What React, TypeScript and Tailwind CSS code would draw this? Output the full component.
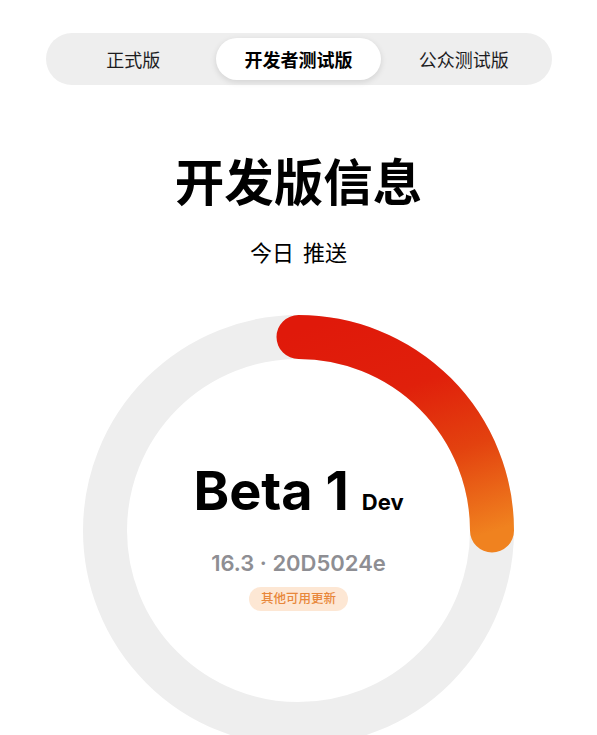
import { useState } from 'react';

const tabs = ['正式版', '开发者测试版', '公众测试版'];

const cjk = "font-['Noto_Sans_CJK_SC',sans-serif]";
const latin = "font-['Inter','Noto_Sans_CJK_SC',sans-serif]";

// progress ring: 431px box, stroke centred on r=193.5
function Ring() {
  const c = 215.5;
  const r = 193.5;
  return (
    <svg width="431" height="431" viewBox="0 0 431 431" className="block">
      <defs>
        <linearGradient id="arc" gradientUnits="userSpaceOnUse" x1="260" y1="0" x2="340" y2="240">
          <stop offset="0" stopColor="#e0190a" />
          <stop offset="0.35" stopColor="#e0200b" />
          <stop offset="0.65" stopColor="#e3420f" />
          <stop offset="1" stopColor="#f0821f" />
        </linearGradient>
      </defs>
      <circle cx={c} cy={c} r={r} fill="none" stroke="#eeeeee" strokeWidth="44" />
      <path
        d={`M ${c} ${c - r} A ${r} ${r} 0 0 1 ${c + r} ${c}`}
        fill="none"
        stroke="url(#arc)"
        strokeWidth="44"
        strokeLinecap="round"
      />
    </svg>
  );
}

export default function App() {
  const [active, setActive] = useState(1);

  return (
    <div className="h-screen overflow-hidden bg-white flex flex-col items-center pt-[33px]">
      {/* segmented control */}
      <div className="shrink-0 w-[506px] h-[52px] rounded-full bg-[#eeeeee] p-[5px] grid grid-cols-3">
        {tabs.map((t, i) => (
          <button
            key={t}
            onClick={() => setActive(i)}
            className={`rounded-full text-[18px] leading-none ${cjk} ${
              active === i
                ? 'bg-white font-bold text-black shadow-[0_2px_6px_rgba(0,0,0,0.12)]'
                : 'text-[#1c1c1e]'
            }`}
          >
            {t}
          </button>
        ))}
      </div>

      <h1 className={`shrink-0 mt-[70px] text-[49.5px] leading-none font-bold text-black ${cjk}`}>开发版信息</h1>
      <div className={`shrink-0 mt-[35px] flex gap-[9px] text-[22px] leading-none text-black ${cjk}`}>
        <span>今日</span>
        <span>推送</span>
      </div>

      <div className="shrink-0 relative mt-[53px]">
        <Ring />
        <div className="absolute inset-0 flex flex-col items-center pt-[149px]">
          <div className={`flex items-baseline gap-[13px] text-black ${latin}`}>
            <span className="text-[54px] leading-none font-bold">Beta 1</span>
            <span className="text-[22px] leading-none font-bold">Dev</span>
          </div>
          <div className={`mt-[34px] text-[22px] leading-none font-semibold text-[#8e8e93] ${latin}`}>
            16.3 · 20D5024e
          </div>
          <div
            className={`mt-[13px] h-[24px] px-[12px] rounded-full bg-[#fde7d4] text-[#e8873a] text-[12.5px] font-medium flex items-center ${cjk}`}
          >
            其他可用更新
          </div>
        </div>
      </div>
    </div>
  );
}
